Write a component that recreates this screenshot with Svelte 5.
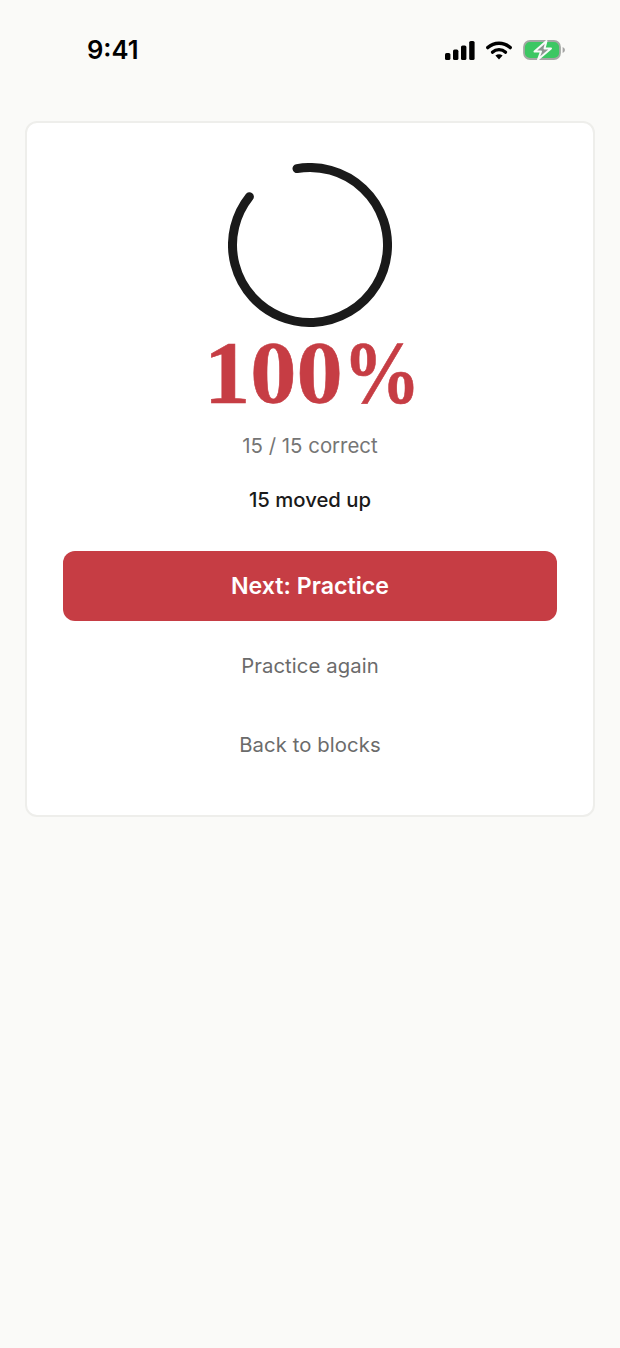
<script>
  const r = 77.5;
  const cx = 82;
  const cy = 82;
  const arc = `M ${cx - 13} ${cy - 76.4} A ${r} ${r} 0 1 1 ${cx - 60.6} ${cy - 48.3}`;
</script>

<div class="page">
  <header class="status">
    <span class="time">9:41</span>
    <div class="icons">
      <svg width="30" height="19" viewBox="0 0 30 19" aria-hidden="true">
        <rect x="0" y="12" width="5.4" height="7" rx="1.6" fill="#000"/>
        <rect x="8" y="8.6" width="5.4" height="10.4" rx="1.6" fill="#000"/>
        <rect x="16" y="4.4" width="5.4" height="14.6" rx="1.6" fill="#000"/>
        <rect x="24.2" y="0" width="5.4" height="19" rx="1.6" fill="#000"/>
      </svg>
      <svg width="26" height="19" viewBox="0 0 26 19" aria-hidden="true">
        <path d="M1.8 6.6 A16.5 16.5 0 0 1 24.2 6.6" fill="none" stroke="#000" stroke-width="3.4" stroke-linecap="round"/>
        <path d="M6.4 11.2 A9.8 9.8 0 0 1 19.6 11.2" fill="none" stroke="#000" stroke-width="3.2" stroke-linecap="round"/>
        <path d="M9.4 14.6 Q13 12 16.6 14.6 L13 18.6 Z" fill="#000"/>
      </svg>
      <svg width="43" height="24" viewBox="0 0 43 24" aria-hidden="true">
        <rect x="1" y="3" width="36" height="18" rx="6" fill="#3cc763" stroke="#a3a8a4" stroke-width="1.8"/>
        <path d="M39.6 9 Q42 10 42 12 Q42 14 39.6 15 Z" fill="#a5a5a5"/>
        <path d="M23.5 3 L11.5 13.5 H18 L15 21.5 L28 10.5 H21.5 Z" fill="#8e9691" stroke="#f8fbf8" stroke-width="2" stroke-linejoin="round"/>
      </svg>
    </div>
  </header>

  <main class="card">
    <svg class="ring" width="164" height="164" viewBox="0 0 164 164" role="img" aria-label="Progress ring">
      <path d={arc} fill="none" stroke="#1a1a1a" stroke-width="9" stroke-linecap="round"/>
    </svg>
    <div class="score"><span class="digits">100</span><span class="pct">%</span></div>
    <p class="correct">15 / 15 correct</p>
    <p class="moved">15 moved up</p>
    <button class="primary">Next: Practice</button>
    <button class="ghost first">Practice again</button>
    <button class="ghost">Back to blocks</button>
  </main>
</div>

<style>
  :global(body) {
    margin: 0;
    background: #fafaf8;
  }
  .page {
    min-height: 1348px;
    background: #fafaf8;
    font-family: Inter, sans-serif;
    box-sizing: border-box;
  }
  .status {
    height: 100px;
    padding: 34px 54px 0 87px;
    box-sizing: border-box;
    display: flex;
    justify-content: space-between;
    align-items: flex-start;
  }
  .time {
    font-size: 25.6px;
    font-weight: 600;
    line-height: 32px;
    color: #000;
  }
  .icons {
    display: flex;
    align-items: center;
    gap: 11px;
    height: 32px;
  }
  .card {
    margin: 20.5px 25px 0;
    height: 696px;
    box-sizing: border-box;
    background: #fff;
    border: 2px solid #eeeeeb;
    border-radius: 12px;
    padding: 40.5px 36px 0;
    display: flex;
    flex-direction: column;
    align-items: center;
  }
  .ring {
    display: block;
    flex: none;
  }
  .score {
    font-family: "Liberation Serif", serif;
    font-weight: 700;
    font-size: 88px;
    line-height: 92px;
    color: #c63d44;
    -webkit-text-stroke: 0.6px #c63d44;
    white-space: nowrap;
  }
  .digits {
    display: inline-block;
    width: 139px;
    transform: scaleX(1.05);
    transform-origin: left center;
  }
  .pct {
    display: inline-block;
    width: 74px;
    transform: scaleX(0.88);
    transform-origin: left center;
  }
  p {
    margin: 0;
  }
  .correct {
    font-size: 20.4px;
    line-height: 28px;
    color: #757575;
    margin-top: 13px;
  }
  .moved {
    font-size: 20.3px;
    line-height: 28px;
    font-weight: 500;
    color: #1a1a1a;
    margin-top: 26px;
  }
  button {
    font-family: inherit;
    border: none;
    cursor: pointer;
    background: none;
    padding: 0;
  }
  .primary {
    width: 494px;
    height: 70px;
    margin-top: 37px;
    background: #c63d44;
    border-radius: 12px;
    color: #fff;
    font-size: 23.2px;
    font-weight: 600;
  }
  .ghost {
    width: 494px;
    height: 50px;
    margin-top: 29px;
    font-size: 20.3px;
    font-weight: 400;
    letter-spacing: 0.1px;
    color: #6b6b6b;
  }
  .ghost.first {
    margin-top: 19.5px;
  }
</style>
